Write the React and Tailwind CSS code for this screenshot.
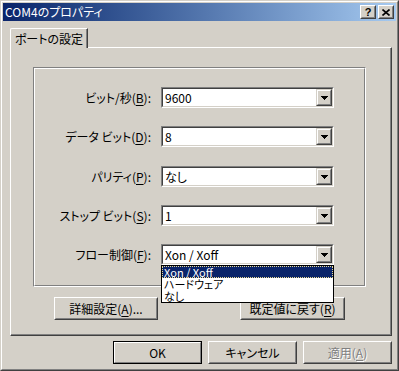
import React from 'react';

const font = "font-['Noto_Sans_CJK_JP','Noto_Sans_CJK_SC',sans-serif] [font-feature-settings:'palt']";

// アクセスキーの下線
const Acc = ({ children }) => <span className="underline underline-offset-[2px]">{children}</span>;

// クラシックな凸ボタン
const Raised = ({ className = '', children }) => (
  <div className={`border border-t-white border-l-white border-r-[#404040] border-b-[#404040] bg-[#d4d0c8] ${className}`}>
    <div className="w-full h-full border border-t-[#d4d0c8] border-l-[#d4d0c8] border-r-[#808080] border-b-[#808080] flex items-center justify-center">
      {children}
    </div>
  </div>
);

const DropButton = () => (
  <div className="w-[16px] h-full border border-t-[#d4d0c8] border-l-[#d4d0c8] border-r-[#404040] border-b-[#404040] bg-[#d4d0c8]">
    <div className="w-full h-full border border-t-white border-l-white border-r-[#808080] border-b-[#808080] flex items-center justify-center">
      <svg width="7" height="4" viewBox="0 0 7 4" shapeRendering="crispEdges">
        <polygon points="0,0 7,0 3.5,4" fill="#000" />
      </svg>
    </div>
  </div>
);

const Combo = ({ value, children }) => (
  <div className="relative w-[173px] h-[21px] ml-[9px]">
    <div className="w-full h-full border border-t-[#808080] border-l-[#808080] border-r-white border-b-white">
      <div className="w-full h-full border border-t-[#404040] border-l-[#404040] border-r-[#d4d0c8] border-b-[#d4d0c8] bg-white flex">
        <div className="flex-1 flex items-center pl-[2px] leading-none">{value}</div>
        <DropButton />
      </div>
    </div>
    {children}
  </div>
);

const rows = [
  { label: <>ビット/秒(<Acc>B</Acc>):</>, value: '9600', mt: 'mt-0' },
  { label: <>データ ビット(<Acc>D</Acc>):</>, value: '8', mt: 'mt-[18px]' },
  { label: <>パリティ(<Acc>P</Acc>):</>, value: 'なし', mt: 'mt-[19px]' },
  { label: <>ストップ ビット(<Acc>S</Acc>):</>, value: '1', mt: 'mt-[18px]' },
  { label: <>フロー制御(<Acc>F</Acc>):</>, value: 'Xon / Xoff', mt: 'mt-[18px]', open: true },
];

const flowOptions = ['Xon / Xoff', 'ハードウェア', 'なし'];

const App = () => {
  return (
    <div className={`w-[399px] h-[371px] bg-[#d4d0c8] text-[12px] text-black ${font} border border-t-[#d4d0c8] border-l-[#d4d0c8] border-r-[#404040] border-b-[#404040]`}>
      <div className="h-full flex flex-col border border-t-white border-l-white border-r-[#808080] border-b-[#808080] p-px">
        {/* タイトルバー */}
        <div className="h-[18px] shrink-0 flex items-center bg-linear-to-r from-[#0a246a] to-[#a6caf0] pl-[2px] pr-[2px]">
          <span className="flex-1 text-white leading-none">COM4のプロパティ</span>
          <Raised className="w-[16px] h-[14px]">
            <span className="font-['Liberation_Sans',sans-serif] font-bold text-[11px] leading-none">?</span>
          </Raised>
          <Raised className="w-[16px] h-[14px] ml-[2px]">
            <svg width="8" height="7" viewBox="0 0 8 7">
              <path d="M0.5 0.5L7.5 6.5M7.5 0.5L0.5 6.5" stroke="#000" strokeWidth="1.6" />
            </svg>
          </Raised>
        </div>

        {/* タブ */}
        <div className="mt-[7px] ml-[7px] mr-[4px] flex flex-col">
          <div className="flex">
            <div className="relative z-10 -mb-px w-[78px] h-[20px] bg-[#d4d0c8] border-t border-l border-r border-t-white border-l-white border-r-[#404040] rounded-tl-[2px] shadow-[inset_-1px_0_0_#808080] flex items-center justify-center leading-none">
              ポートの設定
            </div>
          </div>
          <div className="h-[289px] border border-t-white border-l-white border-r-[#404040] border-b-[#404040] shadow-[inset_-1px_-1px_0_#808080] flex flex-col">
            {/* グループ */}
            <div className="mt-[19px] ml-[22px] w-[333px] h-[220px] border border-t-[#808080] border-l-[#808080] border-r-white border-b-white">
              <div className="w-full h-full border border-t-white border-l-white border-r-[#808080] border-b-[#808080] pt-[18px] flex flex-col">
                {rows.map((r, i) => (
                  <div key={i} className={`flex items-center h-[21px] ${r.mt}`}>
                    <div className="w-[117px] text-right leading-none pr-[1px]">{r.label}</div>
                    <Combo value={r.value}>
                      {r.open && (
                        <div className="absolute top-full left-0 w-full z-20 bg-white border border-black flex flex-col">
                          {flowOptions.map((o, j) => (
                            <div
                              key={o}
                              className={`h-[12px] flex items-center pl-[2px] text-[11px] leading-[11px] ${
                                j === 0 ? 'bg-[#0a246a] text-white outline-1 outline-dotted outline-[#e8d890] -outline-offset-1' : ''
                              }`}
                            >
                              {o}
                            </div>
                          ))}
                        </div>
                      )}
                    </Combo>
                  </div>
                ))}
              </div>
            </div>

            {/* 詳細ボタン */}
            <div className="mt-[10px] ml-[43px] flex">
              <Raised className="w-[104px] h-[23px]">
                <span className="leading-none">詳細設定(<Acc>A</Acc>)...</span>
              </Raised>
              <Raised className="w-[105px] h-[23px] ml-[82px]">
                <span className="leading-none">既定値に戻す(<Acc>R</Acc>)</span>
              </Raised>
            </div>
          </div>
        </div>

        {/* 下部ボタン */}
        <div className="mt-[5px] pr-[4px] flex justify-end gap-[6px]">
          <div className="w-[89px] h-[23px] border border-black">
            <div className="w-full h-full border border-t-white border-l-white border-r-[#808080] border-b-[#808080] bg-[#d4d0c8] flex items-center justify-center leading-none">
              OK
            </div>
          </div>
          <Raised className="w-[89px] h-[23px]">
            <span className="leading-none">キャンセル</span>
          </Raised>
          <Raised className="w-[89px] h-[23px]">
            <span className="leading-none text-[#808080] [text-shadow:1px_1px_0_#fff]">適用(<Acc>A</Acc>)</span>
          </Raised>
        </div>
      </div>
    </div>
  );
};

export default App;
